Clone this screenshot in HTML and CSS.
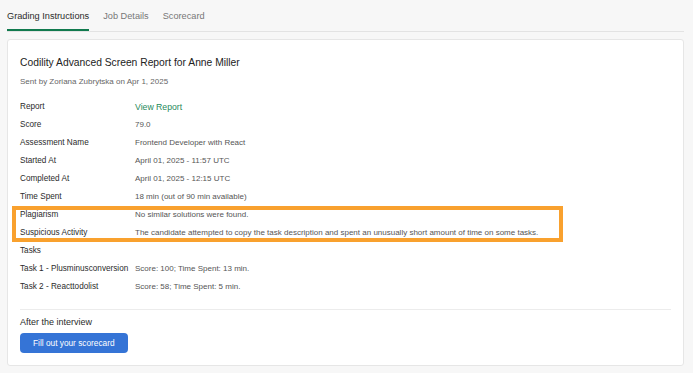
FILE: index.html
```html
<!DOCTYPE html>
<html lang="en">
<head>
<meta charset="UTF-8">
<meta name="viewport" content="width=device-width, initial-scale=1.0">
<title>Grading Instructions</title>
<link rel="stylesheet" href="styles.css">
</head>
<body>
  <div class="tabs">
    <div class="tab active">Grading Instructions</div>
    <div class="tab">Job Details</div>
    <div class="tab">Scorecard</div>
  </div>

  <div class="card">
    <h1 class="title">Codility Advanced Screen Report for Anne Miller</h1>
    <div class="sent">Sent by Zoriana Zubrytska on Apr 1, 2025</div>

    <div class="details">
      <div class="row"><span class="label">Report</span><a class="value link" href="#">View Report</a></div>
      <div class="row"><span class="label">Score</span><span class="value">79.0</span></div>
      <div class="row"><span class="label">Assessment Name</span><span class="value">Frontend Developer with React</span></div>
      <div class="row"><span class="label">Started At</span><span class="value">April 01, 2025 - 11:57 UTC</span></div>
      <div class="row"><span class="label">Completed At</span><span class="value">April 01, 2025 - 12:15 UTC</span></div>
      <div class="row"><span class="label">Time Spent</span><span class="value">18 min (out of 90 min available)</span></div>
      <div class="highlight">
        <div class="row"><span class="label">Plagiarism</span><span class="value">No similar solutions were found.</span></div>
        <div class="row"><span class="label">Suspicious Activity</span><span class="value">The candidate attempted to copy the task description and spent an unusually short amount of time on some tasks.</span></div>
      </div>
      <div class="row"><span class="label">Tasks</span><span class="value"></span></div>
      <div class="row"><span class="label">Task 1 - Plusminusconversion</span><span class="value">Score: 100; Time Spent: 13 min.</span></div>
      <div class="row"><span class="label">Task 2 - Reacttodolist</span><span class="value">Score: 58; Time Spent: 5 min.</span></div>
    </div>

    <div class="after">
      <div class="after-title">After the interview</div>
      <button class="btn">Fill out your scorecard</button>
    </div>
  </div>
</body>
</html>
```

FILE: styles.css
```css
body {
  font-family: "Liberation Sans", Arial, sans-serif;
  margin: 0;
  padding: 0 9px 0 7px;
  background-color: #f7f7f7;
  color: #2b2b2b;
}

.tabs {
  display: flex;
  gap: 14px;
  border-bottom: 1px solid #e3e3e3;
  height: 31px;
}

.tab {
  font-size: 9.2px;
  color: #777;
  padding-top: 11px;
  height: 20px;
}

.tab.active {
  color: #2b2b2b;
  border-bottom: 2px solid #117a4e;
  height: 18px;
}

.card {
  margin-top: 7px;
  background-color: #ffffff;
  border: 1px solid #e6e6e6;
  border-radius: 3px;
  padding: 15px 12px 12px;
}

.title {
  margin: 0;
  font-size: 10.3px;
  font-weight: normal;
  line-height: 16px;
  color: #222;
}

.sent {
  margin-top: 5px;
  font-size: 8px;
  line-height: 12px;
  color: #666;
}

.details {
  margin-top: 10px;
}

.row {
  display: grid;
  grid-template-columns: 115px 1fr;
  height: 18px;
  line-height: 18px;
}

.label {
  font-size: 8.2px;
  color: #2b2b2b;
}

.value {
  font-size: 8px;
  color: #555;
}

.link {
  color: #1f8a5b;
  text-decoration: none;
  font-size: 8.7px;
}

.highlight {
  position: relative;
}

/* orange annotation frame */
.highlight::after {
  content: "";
  position: absolute;
  left: -8px;
  top: 0;
  width: 551px;
  height: 36px;
  box-sizing: border-box;
  border: 4px solid #f9a12e;
}

.after {
  margin-top: 13px;
  border-top: 1px solid #ececec;
  padding-top: 6px;
}

.after-title {
  font-size: 9px;
  line-height: 12px;
  color: #2b2b2b;
}

.btn {
  display: block;
  margin-top: 5px;
  height: 20px;
  padding: 0 13px;
  background-color: #3574d6;
  color: #fff;
  border: none;
  border-radius: 4px;
  font-family: inherit;
  font-size: 8.3px;
  cursor: pointer;
}
```
